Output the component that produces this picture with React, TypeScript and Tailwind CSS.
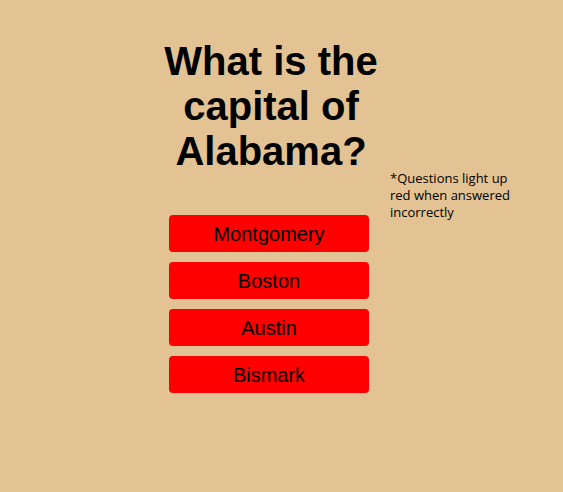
export default function App() {
  const answers = ["Montgomery", "Boston", "Austin", "Bismark"];
  return (
    <div className="w-[563px] h-[492px] bg-[#e3c393] flex pl-[159px] pt-[39px]">
      <div className="w-[220px] flex flex-col">
        <h1 className="text-center text-[40px] leading-[45px] font-bold text-black pl-[4px]" style={{ fontFamily: '"Liberation Sans", Arial, sans-serif' }}>
          What is the capital of Alabama?
        </h1>
        <div className="mt-[41px] flex flex-col gap-[10px] items-center">
          {answers.map((a) => (
            <button
              key={a}
              className="w-[200px] h-[37px] bg-[#ff0000] rounded-[4px] text-[20px] text-black flex items-center justify-center"
              style={{ fontFamily: '"Liberation Sans", Arial, sans-serif' }}
            >
              {a}
            </button>
          ))}
        </div>
      </div>
      <div className="ml-[11px] mt-[131px] w-[130px] text-[13px] leading-[17px] text-black" style={{ fontFamily: '"Open Sans", sans-serif' }}>
        *Questions light up red when answered incorrectly
      </div>
    </div>
  );
}
